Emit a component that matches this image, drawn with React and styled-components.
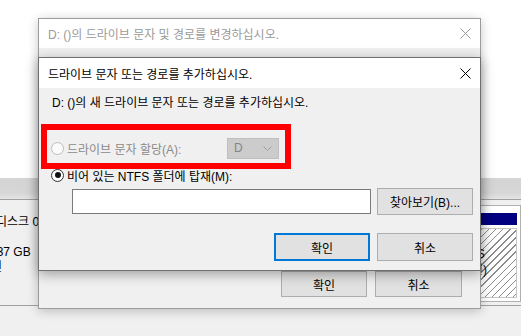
import styled, { createGlobalStyle } from "styled-components";

const GlobalStyle = createGlobalStyle`
  html, body {
    margin: 0;
    padding: 0;
  }
  body {
    width: 521px;
    height: 336px;
    overflow: hidden;
    background: #f0f0f0;
    font-family: "Liberation Sans", "Noto Sans CJK KR", sans-serif;
    font-size: 12px;
    color: #000;
  }
  * {
    box-sizing: border-box;
  }
`;

const Desktop = styled.div`
  position: relative;
  width: 521px;
  height: 336px;
  overflow: hidden;
  display: flex;
  flex-direction: column;
  background: #f0f0f0;
`;

const TopArea = styled.div`
  flex: none;
  height: 178px;
  background: #ffffff;
`;

const Toolbar = styled.div`
  flex: none;
  height: 22px;
  background: linear-gradient(#d4d4d4, #d6d6d6 70%, #e4e4e4);
  border-bottom: 1px solid #a0a0a0;
`;

const DiskRow = styled.div`
  flex: none;
  display: flex;
  height: 106px;
  border-bottom: 1px solid #a0a0a0;
  background: #f0f0f0;
`;

const LabelColumn = styled.div`
  flex: none;
  width: 120px;
  padding-top: 15px;
  overflow: hidden;
`;

const LabelLine = styled.div`
  height: 15px;
  line-height: 15px;
  white-space: nowrap;
  margin-left: ${(p) => p.$shift}px;
`;

const Partitions = styled.div`
  flex: 1;
  display: flex;
  padding-top: 5px;
`;

const Partition = styled.div`
  flex: ${(p) => (p.$width ? `0 0 ${p.$width}px` : "1")};
  height: 97px;
  border: 1px solid #b0b0b0;
  background: #ffffff;
  padding: 7px 3px 3px;
  display: flex;
  flex-direction: column;
  gap: 3px;
`;

const PartitionHead = styled.div`
  height: 12px;
  background: #000080;
`;

const Hatch = styled.div`
  flex: 1;
  border: 1px solid #c4c4c4;
  padding: 1px 0 0 1px;
  background: repeating-linear-gradient(
    135deg,
    #ffffff 0 4px,
    #8c8c8c 4px 5px
  );
`;

const HatchLine = styled.div`
  height: 16px;
  line-height: 16px;
  white-space: nowrap;
  color: #0a0a2a;
`;

const Window = styled.div`
  position: absolute;
  left: 38px;
  top: ${(p) => p.$top}px;
  width: 443px;
  height: ${(p) => p.$height}px;
  display: flex;
  flex-direction: column;
  background: #f0f0f0;
  border: 1px solid ${(p) => (p.$active ? "#707070" : "#9c9c9c")};
  box-shadow: ${(p) =>
    p.$active
      ? "0 3px 12px rgba(0, 0, 0, 0.35)"
      : "0 2px 10px rgba(0, 0, 0, 0.22)"};
`;

const TitleBar = styled.div`
  flex: none;
  height: ${(p) => p.$height}px;
  display: flex;
  align-items: center;
  justify-content: space-between;
  padding-left: 9px;
  background: #ffffff;
  color: ${(p) => (p.$active ? "#000000" : "#9a9a9a")};
  white-space: nowrap;
`;

const CloseButton = styled.div`
  width: 30px;
  height: 100%;
  display: flex;
  align-items: center;
  justify-content: center;
`;

const OuterBody = styled.div`
  flex: 1;
  display: flex;
  align-items: flex-end;
  justify-content: flex-end;
  gap: 8px;
  padding: 0 18px 11px;
`;

const InnerBody = styled.div`
  position: relative;
  flex: 1;
  display: flex;
  flex-direction: column;
  padding: 7px 7px 8px 12px;
`;

const Prompt = styled.div`
  height: 16px;
  line-height: 16px;
  margin-left: 1px;
  white-space: nowrap;
`;

const OptionRow = styled.div`
  display: flex;
  align-items: center;
  height: ${(p) => p.$height}px;
  margin-top: ${(p) => p.$gap}px;
`;

const Radio = styled.span`
  flex: none;
  position: relative;
  width: 13px;
  height: 13px;
  border-radius: 50%;
  border: 1px solid ${(p) => (p.$disabled ? "#bcbcbc" : "#333333")};
  background: ${(p) => (p.$disabled ? "#fbfbfb" : "#ffffff")};

  &::after {
    content: "";
    display: ${(p) => (p.$checked ? "block" : "none")};
    position: absolute;
    left: 2.5px;
    top: 2.5px;
    width: 6px;
    height: 6px;
    border-radius: 50%;
    background: #111111;
  }
`;

const OptionLabel = styled.span`
  flex: none;
  width: ${(p) => (p.$width ? `${p.$width}px` : "auto")};
  margin-left: 3px;
  white-space: nowrap;
  color: ${(p) => (p.$disabled ? "#8a8a8a" : "#000000")};
`;

const Combo = styled.div`
  flex: none;
  width: 52px;
  height: 21px;
  display: flex;
  align-items: center;
  justify-content: space-between;
  padding: 0 6px 0 6px;
  background: #cccccc;
  border: 1px solid #bfbfbf;
  color: #858585;
`;

const PathRow = styled.div`
  display: flex;
  align-items: center;
  height: 27px;
  margin-top: 5px;
  padding-left: 21px;
`;

const PathInput = styled.div`
  width: 300px;
  height: 25px;
  background: #ffffff;
  border: 1px solid #7a7a7a;
`;

const ButtonRow = styled.div`
  display: flex;
  justify-content: flex-end;
  gap: 7px;
  margin-top: 18px;
`;

const Button = styled.div`
  flex: none;
  display: flex;
  align-items: center;
  justify-content: center;
  width: ${(p) => p.$width}px;
  height: ${(p) => p.$height}px;
  margin-left: ${(p) => p.$offset || 0}px;
  background: #e1e1e1;
  border: ${(p) => (p.$focused ? "2px solid #0078d7" : "1px solid #adadad")};
  white-space: nowrap;
`;

const Highlight = styled.div`
  position: absolute;
  left: 2px;
  top: 36px;
  width: 250px;
  height: 45px;
  border: 6px solid #ff0000;
  pointer-events: none;
`;

function CloseIcon({ color }) {
  return (
    <svg width="11" height="11" viewBox="0 0 11 11">
      <path d="M0.5 0.5 L10.5 10.5 M10.5 0.5 L0.5 10.5" stroke={color} strokeWidth="1" fill="none" />
    </svg>
  );
}

function Chevron() {
  return (
    <svg width="9" height="5" viewBox="0 0 9 5">
      <path d="M0.5 0.5 L4.5 4.5 L8.5 0.5" stroke="#a0a0a0" strokeWidth="1" fill="none" />
    </svg>
  );
}

export default function App() {
  return (
    <>
      <GlobalStyle />
      <Desktop>
        <TopArea />
        <Toolbar />
        <DiskRow>
          <LabelColumn>
            <LabelLine $shift={-4}>디스크 0</LabelLine>
            <LabelLine $shift={0}>&nbsp;</LabelLine>
            <LabelLine $shift={-10}>237 GB</LabelLine>
            <LabelLine $shift={-31}>온라인</LabelLine>
          </LabelColumn>
          <Partitions>
            <Partition $width={280}>
              <PartitionHead />
              <Hatch />
            </Partition>
            <Partition>
              <PartitionHead />
              <Hatch>
                <HatchLine>(C:)</HatchLine>
                <HatchLine>58.6 GB NTFS</HatchLine>
                <HatchLine>정상 (주 파티션)</HatchLine>
              </Hatch>
            </Partition>
          </Partitions>
        </DiskRow>

        <Window $top={18} $height={291}>
          <TitleBar $height={29}>
            <span>D: ()의 드라이브 문자 및 경로를 변경하십시오.</span>
            <CloseButton>
              <CloseIcon color="#9a9a9a" />
            </CloseButton>
          </TitleBar>
          <OuterBody>
            <Button $width={86} $height={26}>확인</Button>
            <Button $width={87} $height={26}>취소</Button>
          </OuterBody>
        </Window>

        <Window $top={57} $height={214} $active>
          <TitleBar $height={30} $active>
            <span>드라이브 문자 또는 경로를 추가하십시오.</span>
            <CloseButton>
              <CloseIcon color="#000000" />
            </CloseButton>
          </TitleBar>
          <InnerBody>
            <Prompt>D: ()의 새 드라이브 문자 또는 경로를 추가하십시오.</Prompt>
            <OptionRow $height={22} $gap={26}>
              <Radio $disabled />
              <OptionLabel $disabled $width={160}>
                드라이브 문자 할당(A):
              </OptionLabel>
              <Combo>
                <span>D</span>
                <Chevron />
              </Combo>
            </OptionRow>
            <OptionRow $height={16} $gap={8}>
              <Radio $checked />
              <OptionLabel>비어 있는 NTFS 폴더에 탑재(M):</OptionLabel>
            </OptionRow>
            <PathRow>
              <PathInput />
              <Button $width={96} $height={27} $offset={6}>
                찾아보기(B)...
              </Button>
            </PathRow>
            <ButtonRow>
              <Button $width={96} $height={28} $focused>
                확인
              </Button>
              <Button $width={96} $height={28}>
                취소
              </Button>
            </ButtonRow>
            <Highlight />
          </InnerBody>
        </Window>
      </Desktop>
    </>
  );
}
